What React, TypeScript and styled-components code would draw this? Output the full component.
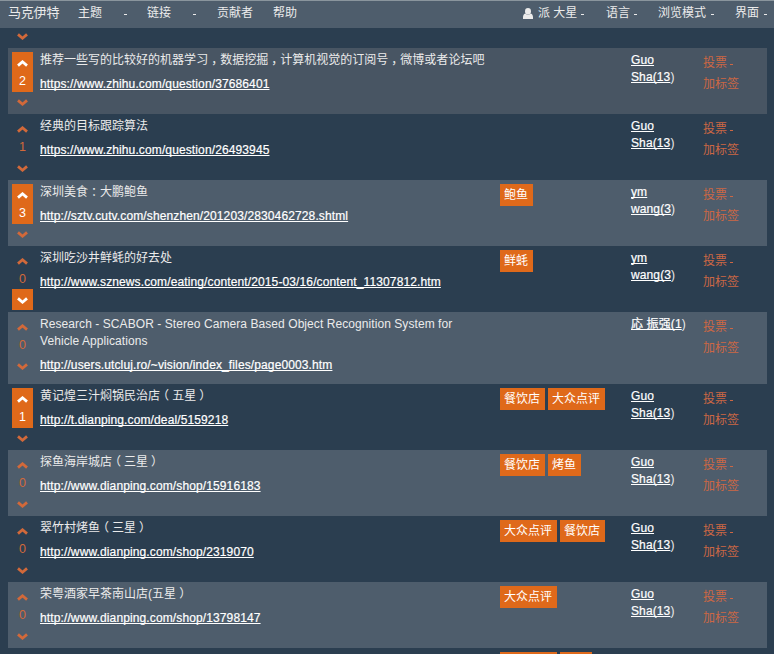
import React from 'react';
import styled, { createGlobalStyle } from 'styled-components';

const Global = createGlobalStyle`
  * { box-sizing: border-box; }
  html, body { margin: 0; height: 654px; overflow: hidden; background: #2b3e50; }
  body {
    font-family: "Liberation Sans", "Noto Sans CJK SC", sans-serif;
    font-size: 12px;
    line-height: 17px;
    color: #ebebeb;
  }
`;

const Page = styled.div`
  height: 654px;
  overflow: hidden;
  background: #2b3e50;
`;

const Navbar = styled.nav`
  display: flex;
  align-items: flex-start;
  height: 28px;
  padding: 4px 0 0 8px;
  background: #4e5d6c;
  border-top: 1px solid #8a959d;
  white-space: nowrap;
`;

const Brand = styled.a`
  width: 70px;
  margin-top: -1px;
  font-size: 13px;
  letter-spacing: -0.2px;
`;

const NavItem = styled.a<{ $w: number }>`
  display: flex;
  align-items: center;
  flex: none;
  width: ${p => p.$w}px;
  height: 17px;
`;

const Dash = styled.i<{ $gap: number }>`
  width: 3px;
  height: 1px;
  margin: 2px 0 0 ${p => p.$gap}px;
  background: currentColor;
`;

const NavRight = styled.div`
  display: flex;
  width: 251px;
  margin-left: auto;
`;

const UserIcon = styled.svg`
  width: 10px;
  height: 11px;
  margin: -1px 5px 0 0;
`;

const Table = styled.div`
  width: 759px;
  margin-left: 8px;
`;

const Row = styled.div<{ $bg: string; $h: number }>`
  display: grid;
  grid-template-columns: 24px 464px 131px 72px 1fr;
  height: ${p => p.$h}px;
  padding: 4px 0 0 4px;
  background: ${p => p.$bg};
`;

const Votes = styled.div`
  display: flex;
  flex-direction: column;
  width: 21px;
`;

const UpBox = styled.div<{ $on: boolean }>`
  display: flex;
  flex-direction: column;
  align-items: center;
  height: 40px;
  padding-top: 8px;
  margin-bottom: -1px;
  background: ${p => (p.$on ? '#df691a' : 'transparent')};
  color: ${p => (p.$on ? '#fff' : '#d2693a')};
`;

const Count = styled.span`
  margin-top: 6px;
  font-size: 12.5px;
  line-height: 16px;
`;

const DownBox = styled.div<{ $on: boolean }>`
  display: flex;
  justify-content: center;
  height: 21px;
  padding-top: 8px;
  background: ${p => (p.$on ? '#df691a' : 'transparent')};
  color: ${p => (p.$on ? '#fff' : '#d2693a')};
`;

const Chevron = styled.svg`
  display: block;
  flex: none;
  width: 11px;
  height: 7px;
`;

const Body = styled.div`
  display: flex;
  flex-direction: column;
  align-items: flex-start;
  padding-left: 4px;
`;

const Title = styled.div`
  margin-bottom: 7px;
  letter-spacing: 0.01px;
  white-space: pre;

  &:lang(en) {
    letter-spacing: 0.07px;
  }
`;

const Punct = styled.span<{ $shift: number }>`
  display: inline-block;
  transform: translateX(${p => p.$shift}px);
`;

const Url = styled.a`
  color: #fff;
  letter-spacing: 0.12px;
  white-space: nowrap;
  -webkit-text-stroke: 0.2px #fff;
  text-decoration: underline;
  text-decoration-skip-ink: none;
  text-underline-offset: 1px;
  text-decoration-thickness: 1px;
`;

const Tags = styled.div`
  display: flex;
  align-items: flex-start;
  gap: 3px;
`;

const Tag = styled.a`
  height: 22px;
  padding: 3px 5px 0 4px;
  background: #df691a;
  color: #fff;
  white-space: nowrap;
`;

const Author = styled.div`
  white-space: pre;
`;

const AuthorLink = styled(Url)`
  white-space: pre;
`;

const Actions = styled.div`
  display: flex;
  flex-direction: column;
  gap: 4px;
  padding-top: 3px;
  color: #cc6744;
`;

const Action = styled.a`
  display: flex;
  align-items: center;
  height: 17px;
`;

const Up = () => (
  <Chevron viewBox="0 0 11 7">
    <path d="M1 5.6 5.5 1.8 10 5.6" fill="none" stroke="currentColor" strokeWidth="2.8" />
  </Chevron>
);

const Down = () => (
  <Chevron viewBox="0 0 11 7">
    <path d="M1 1.4 5.5 5.2 10 1.4" fill="none" stroke="currentColor" strokeWidth="2.8" />
  </Chevron>
);

// Full-width punctuation is centred inside its cell.
const shifts: Record<string, number> = { '（': -3, '）': 3, '：': 3, '，': 3 };

const centred = (text: string) =>
  text.split(/([（）：，])/).map((part, i) =>
    part in shifts ? <Punct key={i} $shift={shifts[part]}>{part}</Punct> : part,
  );

type Link = {
  title: string;
  url: string;
  lang?: string;
  tags?: string[];
  author: string;
  votes: number;
  mine?: 'up' | 'down';
  h?: number;
  bg?: string;
};

const GUO = 'Guo\nSha(13';
const YM = 'ym\nwang(3';

const links: Link[] = [
  { title: '推荐一些写的比较好的机器学习，数据挖掘，计算机视觉的订阅号，微博或者论坛吧', url: 'https://www.zhihu.com/question/37686401', author: GUO, votes: 2, mine: 'up', bg: '#485563' },
  { title: '经典的目标跟踪算法', url: 'https://www.zhihu.com/question/26493945', author: GUO, votes: 1 },
  { title: '深圳美食：大鹏鲍鱼', url: 'http://sztv.cutv.com/shenzhen/201203/2830462728.shtml', tags: ['鲍鱼'], author: YM, votes: 3, mine: 'up' },
  { title: '深圳吃沙井鲜蚝的好去处', url: 'http://www.sznews.com/eating/content/2015-03/16/content_11307812.htm', tags: ['鲜蚝'], author: YM, votes: 0, mine: 'down' },
  { title: 'Research - SCABOR - Stereo Camera Based Object Recognition System for\nVehicle Applications', lang: 'en', url: 'http://users.utcluj.ro/~vision/index_files/page0003.htm', author: '応 振强(1', votes: 0, h: 72 },
  { title: '黄记煌三汁焖锅民治店（五星）', url: 'http://t.dianping.com/deal/5159218', tags: ['餐饮店', '大众点评'], author: GUO, votes: 1, mine: 'up' },
  { title: '探鱼海岸城店（三星）', url: 'http://www.dianping.com/shop/15916183', tags: ['餐饮店', '烤鱼'], author: GUO, votes: 0 },
  { title: '翠竹村烤鱼（三星）', url: 'http://www.dianping.com/shop/2319070', tags: ['大众点评', '餐饮店'], author: GUO, votes: 0 },
  { title: '荣粤酒家早茶南山店(五星）', url: 'http://www.dianping.com/shop/13798147', tags: ['大众点评'], author: GUO, votes: 0 },
];

const PreviousRow = styled.div`
  width: 21px;
  height: 20px;
  margin-left: 4px;
  padding: 5px 5px 0;
  color: #d2693a;
`;

const NextRow = styled.div`
  display: flex;
  gap: 3px;
  height: 6px;
  padding: 4px 0 0 492px;
  overflow: hidden;
`;

const TagEdge = styled.div<{ $w: number }>`
  width: ${p => p.$w}px;
  background: #df691a;
`;

export default function App() {
  return (
    <Page>
      <Global />
      <Navbar>
        <Brand>马克伊特</Brand>
        <NavItem $w={69}>主题<Dash $gap={22} /></NavItem>
        <NavItem $w={70}>链接<Dash $gap={22} /></NavItem>
        <NavItem $w={56}>贡献者</NavItem>
        <NavItem $w={40}>帮助</NavItem>
        <NavRight>
          <NavItem $w={83}>
            <UserIcon viewBox="0 0 10 11">
              <ellipse cx="5" cy="3.3" rx="3" ry="3.3" fill="currentColor" />
              <path d="M0 11V9C0 6.8 1.2 5.6 2.6 5.4 4 7 6 7 7.4 5.4 8.8 5.6 10 6.8 10 9V11Z" fill="currentColor" />
            </UserIcon>
            派 大星<Dash $gap={4} />
          </NavItem>
          <NavItem $w={52}>语言<Dash $gap={4} /></NavItem>
          <NavItem $w={77}>浏览模式<Dash $gap={5} /></NavItem>
          <NavItem $w={39}>界面<Dash $gap={5} /></NavItem>
        </NavRight>
      </Navbar>
      <Table>
        <PreviousRow><Down /></PreviousRow>
        {links.map((l, i) => (
          <Row key={i} $h={l.h ?? 66} $bg={l.bg ?? (i % 2 ? '#2b3e50' : '#4e5d6c')}>
            <Votes>
              <UpBox $on={l.mine === 'up'}><Up /><Count>{l.votes}</Count></UpBox>
              <DownBox $on={l.mine === 'down'}><Down /></DownBox>
            </Votes>
            <Body>
              <Title lang={l.lang}>{centred(l.title)}</Title>
              <Url>{l.url}</Url>
            </Body>
            <Tags>{l.tags?.map(t => <Tag key={t}>{t}</Tag>)}</Tags>
            <Author><AuthorLink>{l.author}</AuthorLink>)</Author>
            <Actions>
              <Action>投票<Dash $gap={3} /></Action>
              <Action>加标签</Action>
            </Actions>
          </Row>
        ))}
        <NextRow>
          <TagEdge $w={57} />
          <TagEdge $w={32} />
        </NextRow>
      </Table>
    </Page>
  );
}
